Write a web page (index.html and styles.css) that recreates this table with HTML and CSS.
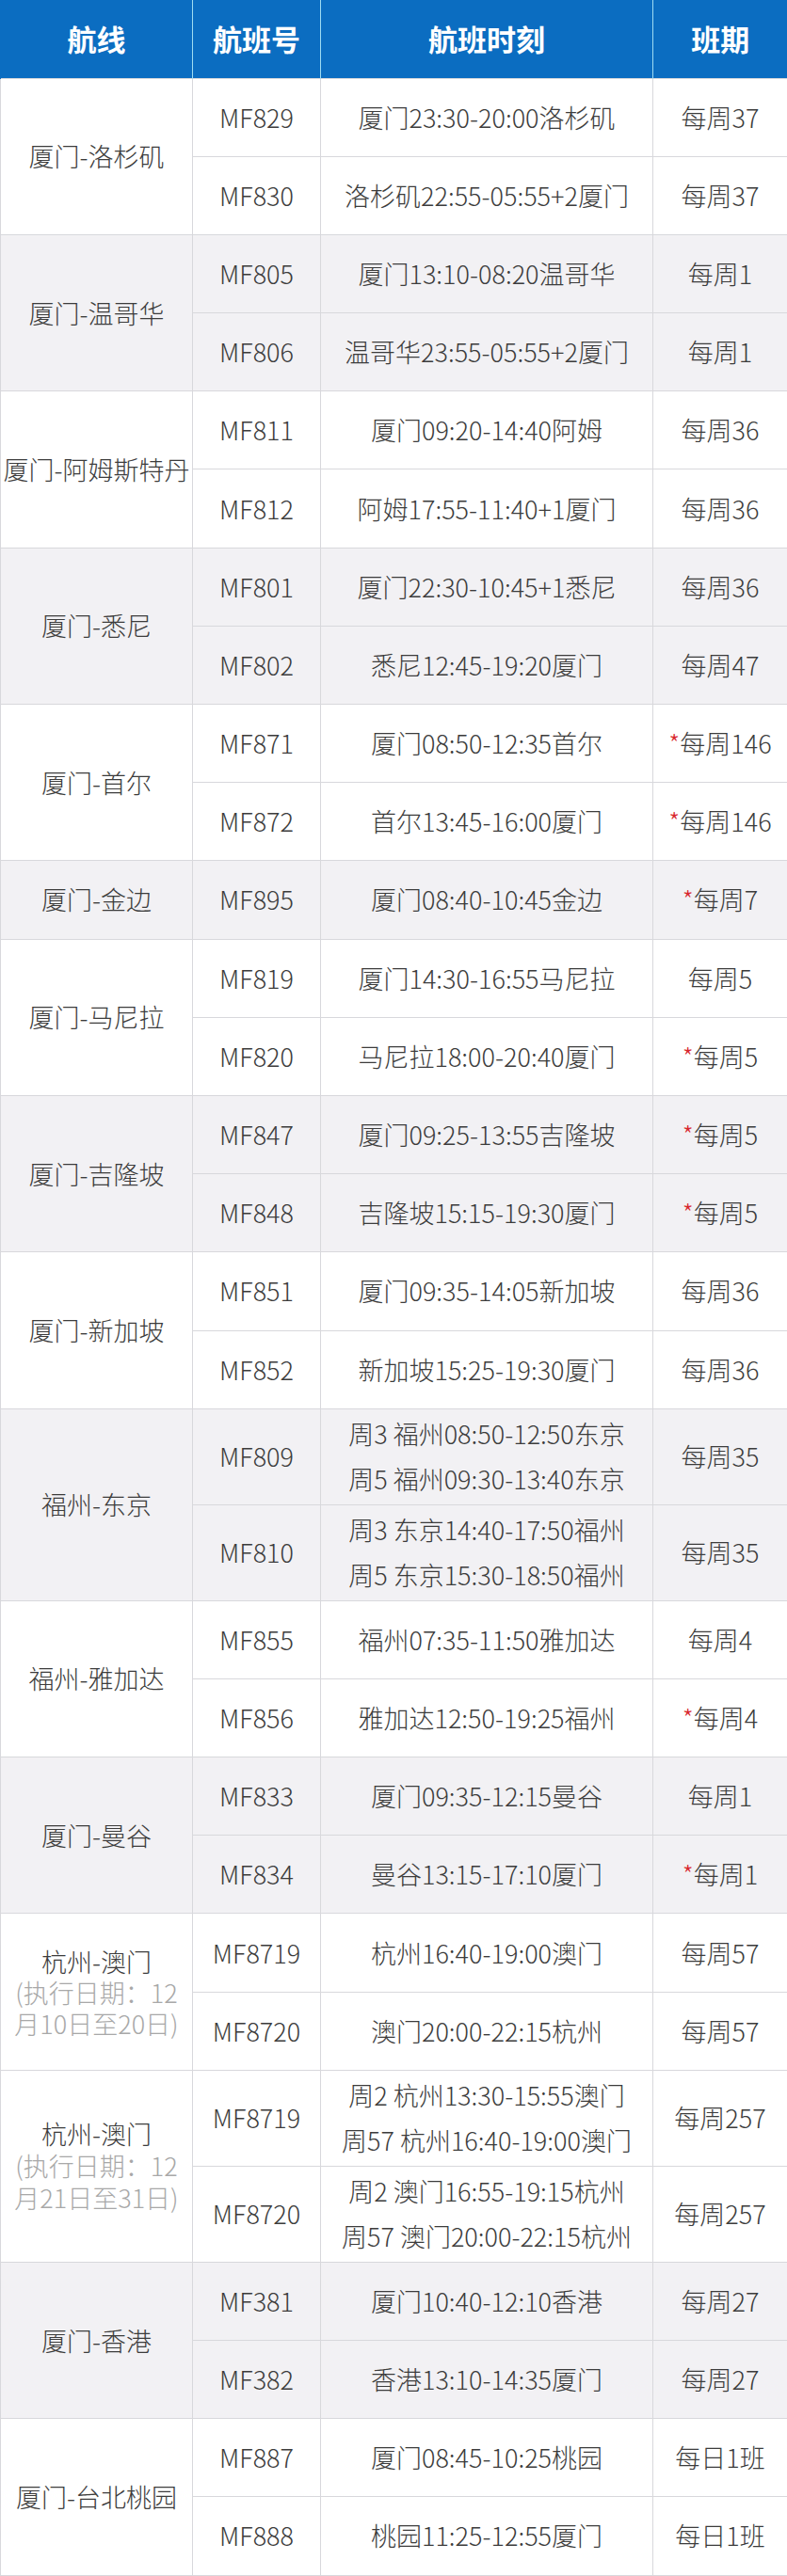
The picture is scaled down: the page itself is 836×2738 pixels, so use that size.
FILE: index.html
```html
<!DOCTYPE html>
<html lang="zh-CN">
<head>
<meta charset="utf-8">
<title>航班时刻表</title>
<link rel="stylesheet" href="styles.css">
</head>
<body>
<table class="sched">
  <colgroup>
    <col class="c-route"><col class="c-no"><col class="c-time"><col class="c-freq">
  </colgroup>
  <thead>
    <tr class="head"><th>航线</th><th>航班号</th><th>航班时刻</th><th>班期</th></tr>
  </thead>
  <tbody class="w">
    <tr><td rowspan="2" class="route">厦门-洛杉矶</td><td>MF829</td><td>厦门23:30-20:00洛杉矶</td><td>每周37</td></tr>
    <tr><td>MF830</td><td>洛杉矶22:55-05:55+2厦门</td><td>每周37</td></tr>
  </tbody>
  <tbody class="g">
    <tr><td rowspan="2" class="route">厦门-温哥华</td><td>MF805</td><td>厦门13:10-08:20温哥华</td><td>每周1</td></tr>
    <tr><td>MF806</td><td>温哥华23:55-05:55+2厦门</td><td>每周1</td></tr>
  </tbody>
  <tbody class="w">
    <tr><td rowspan="2" class="route">厦门-阿姆斯特丹</td><td>MF811</td><td>厦门09:20-14:40阿姆</td><td>每周36</td></tr>
    <tr><td>MF812</td><td>阿姆17:55-11:40+1厦门</td><td>每周36</td></tr>
  </tbody>
  <tbody class="g">
    <tr><td rowspan="2" class="route">厦门-悉尼</td><td>MF801</td><td>厦门22:30-10:45+1悉尼</td><td>每周36</td></tr>
    <tr><td>MF802</td><td>悉尼12:45-19:20厦门</td><td>每周47</td></tr>
  </tbody>
  <tbody class="w">
    <tr><td rowspan="2" class="route">厦门-首尔</td><td>MF871</td><td>厦门08:50-12:35首尔</td><td><span class="star">*</span>每周146</td></tr>
    <tr><td>MF872</td><td>首尔13:45-16:00厦门</td><td><span class="star">*</span>每周146</td></tr>
  </tbody>
  <tbody class="g">
    <tr><td class="route">厦门-金边</td><td>MF895</td><td>厦门08:40-10:45金边</td><td><span class="star">*</span>每周7</td></tr>
  </tbody>
  <tbody class="w">
    <tr><td rowspan="2" class="route">厦门-马尼拉</td><td>MF819</td><td>厦门14:30-16:55马尼拉</td><td>每周5</td></tr>
    <tr><td>MF820</td><td>马尼拉18:00-20:40厦门</td><td><span class="star">*</span>每周5</td></tr>
  </tbody>
  <tbody class="g">
    <tr><td rowspan="2" class="route">厦门-吉隆坡</td><td>MF847</td><td>厦门09:25-13:55吉隆坡</td><td><span class="star">*</span>每周5</td></tr>
    <tr><td>MF848</td><td>吉隆坡15:15-19:30厦门</td><td><span class="star">*</span>每周5</td></tr>
  </tbody>
  <tbody class="w">
    <tr><td rowspan="2" class="route">厦门-新加坡</td><td>MF851</td><td>厦门09:35-14:05新加坡</td><td>每周36</td></tr>
    <tr><td>MF852</td><td>新加坡15:25-19:30厦门</td><td>每周36</td></tr>
  </tbody>
  <tbody class="g">
    <tr class="tall"><td rowspan="2" class="route">福州-东京</td><td>MF809</td><td>周3 福州08:50-12:50东京<br>周5 福州09:30-13:40东京</td><td>每周35</td></tr>
    <tr class="tall"><td>MF810</td><td>周3 东京14:40-17:50福州<br>周5 东京15:30-18:50福州</td><td>每周35</td></tr>
  </tbody>
  <tbody class="w">
    <tr><td rowspan="2" class="route">福州-雅加达</td><td>MF855</td><td>福州07:35-11:50雅加达</td><td>每周4</td></tr>
    <tr><td>MF856</td><td>雅加达12:50-19:25福州</td><td><span class="star">*</span>每周4</td></tr>
  </tbody>
  <tbody class="g">
    <tr><td rowspan="2" class="route">厦门-曼谷</td><td>MF833</td><td>厦门09:35-12:15曼谷</td><td>每周1</td></tr>
    <tr><td>MF834</td><td>曼谷13:15-17:10厦门</td><td><span class="star">*</span>每周1</td></tr>
  </tbody>
  <tbody class="w">
    <tr><td rowspan="2" class="route note-cell">杭州-澳门<br><span class="note">(执行日期：12<br>月10日至20日)</span></td><td>MF8719</td><td>杭州16:40-19:00澳门</td><td>每周57</td></tr>
    <tr><td>MF8720</td><td>澳门20:00-22:15杭州</td><td>每周57</td></tr>
  </tbody>
  <tbody class="w">
    <tr class="tall"><td rowspan="2" class="route note-cell">杭州-澳门<br><span class="note">(执行日期：12<br>月21日至31日)</span></td><td>MF8719</td><td>周2 杭州13:30-15:55澳门<br>周57 杭州16:40-19:00澳门</td><td>每周257</td></tr>
    <tr class="tall"><td>MF8720</td><td>周2 澳门16:55-19:15杭州<br>周57 澳门20:00-22:15杭州</td><td>每周257</td></tr>
  </tbody>
  <tbody class="g">
    <tr><td rowspan="2" class="route">厦门-香港</td><td>MF381</td><td>厦门10:40-12:10香港</td><td>每周27</td></tr>
    <tr><td>MF382</td><td>香港13:10-14:35厦门</td><td>每周27</td></tr>
  </tbody>
  <tbody class="w">
    <tr><td rowspan="2" class="route">厦门-台北桃园</td><td>MF887</td><td>厦门08:45-10:25桃园</td><td>每日1班</td></tr>
    <tr><td>MF888</td><td>桃园11:25-12:55厦门</td><td>每日1班</td></tr>
  </tbody>
</table>
</body>
</html>
```

FILE: styles.css
```css
html, body {
  margin: 0;
  padding: 0;
  background: #ffffff;
}

.sched {
  width: 836px;
  border-collapse: collapse;
  table-layout: fixed;
  font-family: "Noto Sans CJK SC", "Noto Sans", sans-serif;
  font-weight: 300;
  color: #3c3c3c;
}

.c-route { width: 204px; }
.c-no { width: 136px; }
.c-time { width: 353px; }
.c-freq { width: 143px; }

.head th {
  box-sizing: border-box;
  height: 83px;
  padding: 0;
  background: #0b6dc1;
  color: #ffffff;
  font-weight: 700;
  font-size: 31px;
  line-height: 34px;
  border-left: 1px solid #9fdcf2;
  text-align: center;
  vertical-align: middle;
}
.head th:first-child { border-left: 1px solid #0b6dc1; }

.sched td {
  box-sizing: border-box;
  height: 83.2px;
  padding: 0 2px;
  border: 1px solid #d8d8dc;
  text-align: center;
  vertical-align: middle;
  font-size: 27px;
  line-height: 34px;
  white-space: nowrap;
}

.sched tr.tall td {
  height: 102px;
  line-height: 48px;
}

.sched td.route {
  white-space: normal;
}

.sched tr.tall td.route { line-height: 34px; }

.sched td.note-cell {
  line-height: 33px;
  padding: 0;
}

.note {
  color: #a8a8a8;
}

tbody.w td { background: #ffffff; }
tbody.g td { background: #f2f1f4; }

.star {
  color: #d8262c;
}
```
